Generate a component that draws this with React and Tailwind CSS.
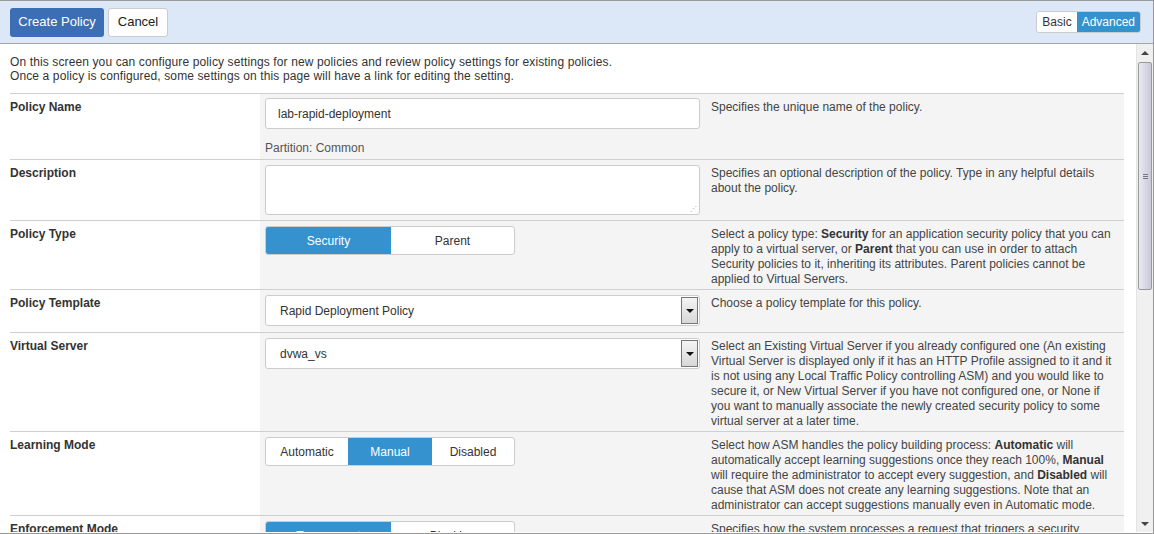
import React from "react";

const font = { fontFamily: '"Liberation Sans", Arial, sans-serif' };

function Row({ h, label, children, desc }) {
  return (
    <div className={`flex border-t border-[#cfcfcf]`} style={{ height: h }}>
      <div className="w-[250px] shrink-0 bg-white pt-[6px] text-[12px] font-bold leading-[15px] text-[#333]">
        {label}
      </div>
      <div className="w-[443px] shrink-0 bg-[#f4f4f4] pl-[5px] pr-[3px] pt-[4px]">{children}</div>
      <div className="flex-1 bg-[#f4f4f4] pl-[8px] pr-[6px] pt-[6px] text-[12px] leading-[15px] text-[#444]">
        {desc}
      </div>
    </div>
  );
}

function Select({ value }) {
  return (
    <div className="flex h-[31px] w-[435px] items-center rounded-[3px] border border-[#ccc] bg-white">
      <span className="flex-1 pl-[14px] text-[12px] text-[#333]">{value}</span>
      <div className="mr-[1px] flex h-[27px] w-[17px] items-center justify-center border border-[#777] bg-gradient-to-b from-[#f4f4f4] to-[#d8d8d8]">
        <div className="h-0 w-0 border-x-[4px] border-t-[4px] border-x-transparent border-t-[#111]" />
      </div>
    </div>
  );
}

function Toggle({ items, active, widths }) {
  return (
    <div className="flex h-[29px] overflow-hidden rounded-[3px] border border-[#ccc] bg-white text-[12px]">
      {items.map((it, i) => (
        <div
          key={it}
          style={{ width: widths[i] }}
          className={
            i === active
              ? "flex items-center justify-center bg-[#3592cf] text-white"
              : `flex items-center justify-center text-[#333] ${i > 0 && i - 1 !== active ? "border-l border-[#ccc]" : ""}`
          }
        >
          {it}
        </div>
      ))}
    </div>
  );
}

export default function App() {
  return (
    <div style={font} className="h-[534px] w-[1154px] overflow-hidden border-t border-r border-b border-[#999] bg-white">
      <div className="flex h-[43px] items-center justify-between border-b border-[#a5a5a5] bg-[#dce8f8] pl-[10px] pr-[12px]">
        <div className="flex gap-[4px]">
          <button className="h-[29px] w-[94px] rounded-[3px] bg-[#3b6eb4] text-[13px] text-white">Create Policy</button>
          <button className="h-[29px] w-[60px] rounded-[3px] border border-[#ccc] bg-white text-[13px] text-[#222]">Cancel</button>
        </div>
        <div className="flex h-[22px] overflow-hidden rounded-[3px] border border-[#ccc] text-[12px]">
          <div className="flex items-center bg-white px-[5px] text-[#333]">Basic</div>
          <div className="flex items-center bg-[#3592cf] px-[5px] text-white">Advanced</div>
        </div>
      </div>
      <div className="flex h-[488px]">
        <div className="flex-1 overflow-hidden pl-[10px] pr-[12px]">
          <div className="pt-[11px] pb-[10px] text-[12px] leading-[14px] tracking-[0.12px] text-[#333]">
            <div>On this screen you can configure policy settings for new policies and review policy settings for existing policies.</div>
            <div>Once a policy is configured, some settings on this page will have a link for editing the setting.</div>
          </div>
          <Row h={66} label="Policy Name" desc="Specifies the unique name of the policy.">
            <div className="flex h-[31px] w-[435px] items-center rounded-[3px] border border-[#ccc] bg-white pl-[12px] text-[12px] text-[#333]">
              lab-rapid-deployment
            </div>
            <div className="mt-[10px] text-[12px] text-[#555]">Partition: Common</div>
          </Row>
          <Row h={61} label="Description" desc="Specifies an optional description of the policy. Type in any helpful details about the policy.">
            <div className="relative mt-[1px] h-[50px] w-[435px] rounded-[3px] border border-[#ccc] bg-white">
              <div className="absolute bottom-[2px] right-[2px] text-[7px] leading-none text-[#aaa]">⋰</div>
            </div>
          </Row>
          <Row
            h={69}
            label="Policy Type"
            desc={
              <>
                Select a policy type: <b className="text-[#333]">Security</b> for an application security policy that you can apply to a virtual server, or <b className="text-[#333]">Parent</b> that you can use in order to attach Security policies to it, inheriting its attributes. Parent policies cannot be applied to Virtual Servers.
              </>
            }
          >
            <div className="mt-[1px] w-[250px]">
              <Toggle items={["Security", "Parent"]} active={0} widths={[125, 123]} />
            </div>
          </Row>
          <Row h={43} label="Policy Template" desc="Choose a policy template for this policy.">
            <div className="mt-[1px]"><Select value="Rapid Deployment Policy" /></div>
          </Row>
          <Row
            h={99}
            label="Virtual Server"
            desc="Select an Existing Virtual Server if you already configured one (An existing Virtual Server is displayed only if it has an HTTP Profile assigned to it and it is not using any Local Traffic Policy controlling ASM) and you would like to secure it, or New Virtual Server if you have not configured one, or None if you want to manually associate the newly created security policy to some virtual server at a later time."
          >
            <div className="mt-[1px]"><Select value="dvwa_vs" /></div>
          </Row>
          <Row
            h={84}
            label="Learning Mode"
            desc={
              <>
                Select how ASM handles the policy building process: <b className="text-[#333]">Automatic</b> will automatically accept learning suggestions once they reach 100%, <b className="text-[#333]">Manual</b> will require the administrator to accept every suggestion, and <b className="text-[#333]">Disabled</b> will cause that ASM does not create any learning suggestions. Note that an administrator can accept suggestions manually even in Automatic mode.
              </>
            }
          >
            <div className="mt-[1px] w-[250px]">
              <Toggle items={["Automatic", "Manual", "Disabled"]} active={1} widths={[82, 84, 82]} />
            </div>
          </Row>
          <Row
            h={60}
            label="Enforcement Mode"
            desc={
              <>
                Specifies how the system processes a request that triggers a security
                <br />
                policy violation.
              </>
            }
          >
            <div className="mt-[1px] w-[250px]">
              <Toggle items={["Transparent", "Blocking"]} active={0} widths={[125, 123]} />
            </div>
          </Row>
        </div>
        <div className="flex w-[17px] shrink-0 flex-col border-l border-[#e4e4e4] bg-[#f0f0f0]">
          <div className="flex h-[18px] items-center justify-center">
            <div className="h-0 w-0 border-x-[4px] border-b-[4px] border-x-transparent border-b-[#444]" />
          </div>
          <div className="mx-[1px] flex h-[228px] items-center justify-center rounded-[2px] border border-[#9a9a9a] bg-gradient-to-r from-[#e9e9f2] via-[#d9d9e6] to-[#c9c9d8]">
            <div className="flex flex-col gap-[1px]">
              <div className="h-px w-[5px] bg-[#777]" />
              <div className="h-px w-[5px] bg-[#777]" />
              <div className="h-px w-[5px] bg-[#777]" />
            </div>
          </div>
          <div className="flex-1" />
          <div className="flex h-[17px] items-center justify-center">
            <div className="h-0 w-0 border-x-[4px] border-t-[4px] border-x-transparent border-t-[#444]" />
          </div>
        </div>
      </div>
    </div>
  );
}
